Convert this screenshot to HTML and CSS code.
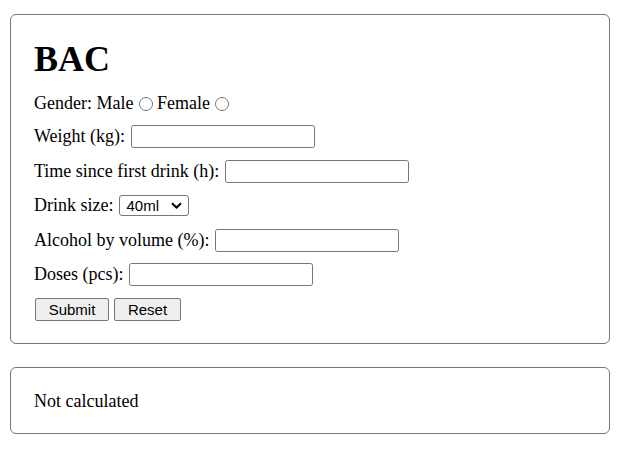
FILE: index.html
```html
<!DOCTYPE html>
<html>
<head>
<meta charset="utf-8">
<title>BAC</title>
<link rel="stylesheet" href="styles.css">
</head>
<body>
<div class="page">
  <form class="card form-card">
    <h1 class="title">BAC</h1>
    <div class="row row-gender"><span class="label">Gender: Male</span><input class="radio" type="radio" name="g"><span class="label">Female</span><input class="radio" type="radio" name="g"></div>
    <div class="row"><label class="label">Weight (kg):</label><input class="field" type="text"></div>
    <div class="row"><label class="label">Time since first drink (h):</label><input class="field" type="text"></div>
    <div class="row"><label class="label">Drink size:</label><select class="select"><option>40ml</option><option>330ml</option><option>500ml</option></select></div>
    <div class="row"><label class="label">Alcohol by volume (%):</label><input class="field" type="text"></div>
    <div class="row"><label class="label">Doses (pcs):</label><input class="field" type="text"></div>
    <div class="row buttons"><button class="btn btn-submit" type="button">Submit</button><button class="btn btn-reset" type="reset">Reset</button></div>
  </form>
  <div class="card result-card">Not calculated</div>
</div>
</body>
</html>
```
FILE: styles.css
```css
html, body {
  margin: 0;
  padding: 0;
  background: #ffffff;
}
body {
  font-family: "Liberation Serif", "Times New Roman", serif;
  font-size: 18px;
  color: #000;
}
.page {
  padding: 14px 10px;
  display: flex;
  flex-direction: column;
  gap: 23px;
}
.card {
  border: 1px solid #767676;
  border-radius: 6px;
}
.form-card {
  padding: 24px 23px 22px;
  display: flex;
  flex-direction: column;
  gap: 11.5px;
}
.title {
  font-size: 36px;
  font-weight: bold;
  margin: 0;
  line-height: 41px;
}
.row {
  display: flex;
  align-items: baseline;
  line-height: 23px;
  height: 23px;
}
.row-gender {
  height: 22px;
}
.row .label {
  margin-right: 6px;
}
.row-gender .label {
  margin-right: 0;
}
.radio {
  -webkit-appearance: none;
  appearance: none;
  box-sizing: border-box;
  width: 14px;
  height: 14px;
  border: 1px solid #767676;
  border-radius: 50%;
  background: #fff;
  margin: 0 4px 0 5.5px;
  align-self: center;
  position: relative;
  top: 1px;
}
.field {
  box-sizing: border-box;
  width: 184px;
  height: 23px;
  border: 1px solid #767676;
  border-radius: 2.5px;
  padding: 1px 2px;
  font-family: "Liberation Sans", Arial, sans-serif;
  font-size: 15px;
  background: #fff;
  margin: 0;
}
.select {
  -webkit-appearance: none;
  appearance: none;
  box-sizing: border-box;
  width: 70px;
  height: 21px;
  font-family: "Liberation Sans", Arial, sans-serif;
  font-size: 15px;
  color: #000;
  border: 1px solid #767676;
  border-radius: 3px;
  padding: 0 0 0 6px;
  background-color: #fff;
  background-image: url("data:image/svg+xml,%3Csvg xmlns='http://www.w3.org/2000/svg' width='11' height='7' viewBox='0 0 11 7'%3E%3Cpath d='M1 1.2 L5.5 5.5 L10 1.2' fill='none' stroke='%23000' stroke-width='2'/%3E%3C/svg%3E");
  background-repeat: no-repeat;
  background-position: right 6px center;
  margin: 0;
}
.buttons {
  gap: 5px;
  align-items: center;
}
.btn {
  box-sizing: border-box;
  height: 23px;
  font-family: "Liberation Sans", Arial, sans-serif;
  font-size: 15px;
  background: #efefef;
  border: 1px solid #767676;
  border-radius: 2px;
  padding: 0 6px;
  margin: 0 0 0 1px;
  color: #000;
}
.btn-submit { width: 74px; }
.btn-reset { width: 67px; margin-left: 0; }
.result-card {
  padding: 23px 23px 21px;
  line-height: 21px;
}
```
